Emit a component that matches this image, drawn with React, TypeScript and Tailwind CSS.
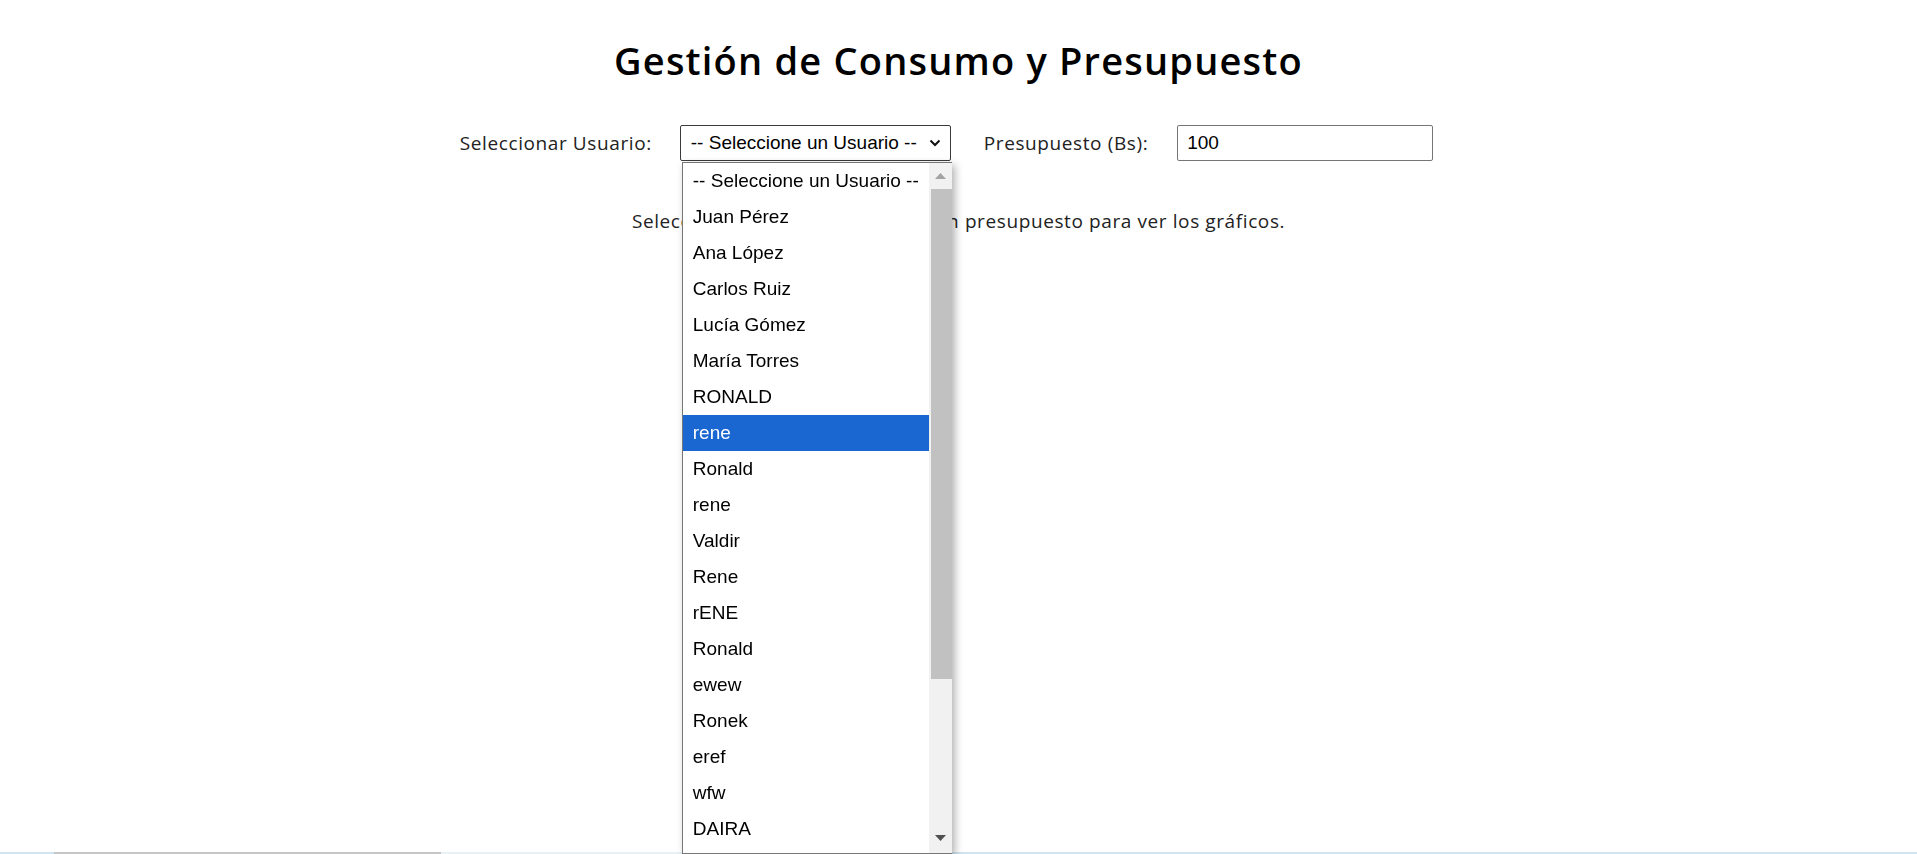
import React from "react";

const users = [
  "-- Seleccione un Usuario --",
  "Juan Pérez",
  "Ana López",
  "Carlos Ruiz",
  "Lucía Gómez",
  "María Torres",
  "RONALD",
  "rene",
  "Ronald",
  "rene",
  "Valdir",
  "Rene",
  "rENE",
  "Ronald",
  "ewew",
  "Ronek",
  "eref",
  "wfw",
  "DAIRA",
  "Mario",
];

export default function App() {
  return (
    <div className="h-screen overflow-hidden bg-white relative font-['Open_Sans',sans-serif] text-black">
      <div className="flex justify-center pt-[37px]">
        <h1 className="text-[38px] leading-[46px] font-semibold tracking-[1.2px] font-['Open_Sans',sans-serif]">
          Gestión de Consumo y Presupuesto
        </h1>
      </div>
      <div className="flex justify-center items-center mt-[42px] pr-[24px]">
        <span className="text-[19px] tracking-[0.6px] text-[#222] mr-[28px]">Seleccionar Usuario:</span>
        <div className="relative">
          <div className="w-[271px] h-[36px] border border-[#3b3b3b] rounded-[2px] flex items-center pl-[10px] pr-[8px] font-['Liberation_Sans',Arial,sans-serif] text-[19px]">
            <span className="flex-1">-- Seleccione un Usuario --</span>
            <svg width="12" height="8" viewBox="0 0 12 8" className="mr-[1px]">
              <path d="M1.5 1.5 L6 6 L10.5 1.5" fill="none" stroke="#111" strokeWidth="2" />
            </svg>
          </div>
          <div className="absolute left-[2px] top-[37px] w-[270px] h-[692px] bg-white border border-[#767676] border-r-0 flex shadow-[3px_3px_8px_rgba(0,0,0,0.3)] z-10 overflow-hidden font-['Liberation_Sans',Arial,sans-serif] text-[19px]">
            <div className="flex-1 flex flex-col">
              {users.map((u, i) => (
                <div
                  key={i}
                  className={
                    i === 7
                      ? "h-[36px] shrink-0 flex items-center pl-[10px] bg-[#1a67d2] text-white"
                      : "h-[36px] shrink-0 flex items-center pl-[10px] text-black"
                  }
                >
                  {u}
                </div>
              ))}
            </div>
            <div className="w-[23px] bg-[#f1f1f1] flex flex-col items-stretch">
              <div className="h-[26px] flex items-center justify-center">
                <svg width="11" height="6" viewBox="0 0 11 6">
                  <path d="M0 6 L5.5 0 L11 6 Z" fill="#a3a3a3" />
                </svg>
              </div>
              <div className="h-[490px] ml-[2px] bg-[#c1c1c1]" />
              <div className="flex-1" />
              <div className="h-[24px] flex items-center justify-center mb-[3px]">
                <svg width="11" height="6" viewBox="0 0 11 6">
                  <path d="M0 0 L11 0 L5.5 6 Z" fill="#505050" />
                </svg>
              </div>
            </div>
          </div>
        </div>
        <span className="text-[19px] tracking-[0.6px] text-[#222] ml-[33px] mr-[29px]">Presupuesto (Bs):</span>
        <div className="w-[256px] h-[36px] border border-[#767676] rounded-[2px] flex items-center pl-[9px] font-['Liberation_Sans',Arial,sans-serif] text-[19px]">
          100
        </div>
      </div>
      <div className="flex justify-center mt-[47px]">
        <span className="text-[19px] leading-[26px] tracking-[0.6px] text-[#222]">
          Seleccione un usuario e ingrese un presupuesto para ver los gráficos.
        </span>
      </div>
      <div className="fixed bottom-0 left-0 right-0 h-[2px] flex bg-[#d0e4ef]">
        <div className="w-[54px]" />
        <div className="w-[387px] bg-[#c6c6c6]" />
        <div className="w-[340px] bg-[#e8f1f6]" />
      </div>
    </div>
  );
}
